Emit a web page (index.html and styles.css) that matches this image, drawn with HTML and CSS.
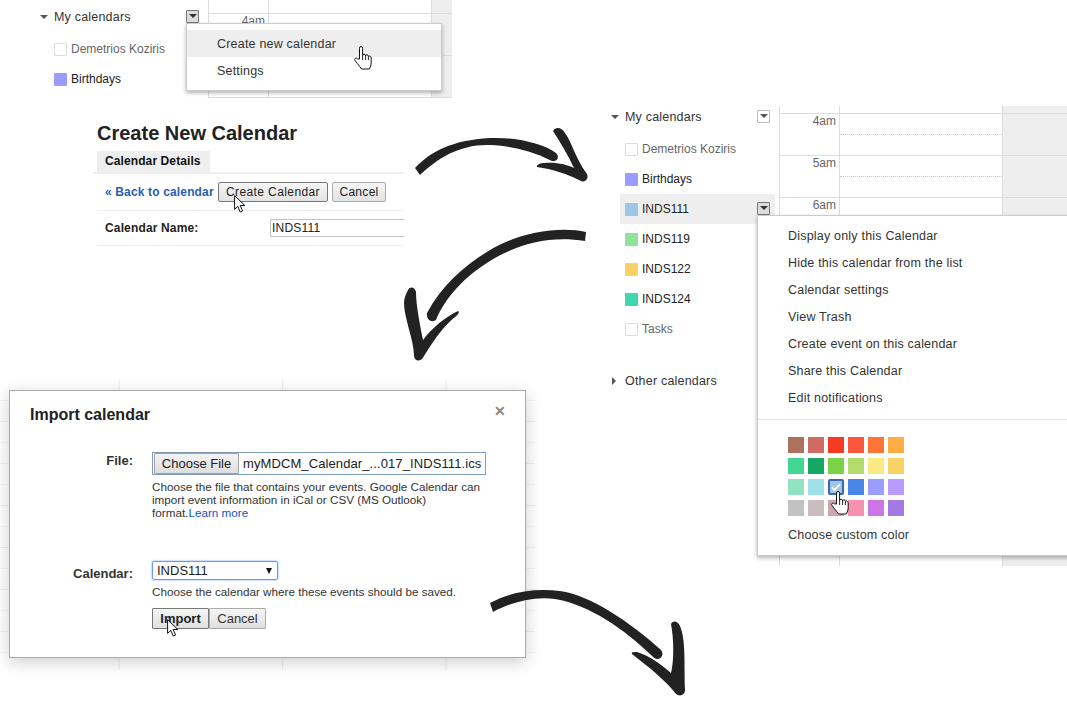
FILE: index.html
```html
<!DOCTYPE html>
<html lang="en">
<head>
    <meta charset="UTF-8">
    <title>Adding a calendar</title>
    <link rel="stylesheet" href="styles.css">
</head>
<body>
<div class="canvas">

    <!-- top left: my calendars menu -->
    <div class="cal-panel cal-small">
        <div class="sidebar">
            <div class="side-head">
                <span class="tri-down"></span>My calendars
                <span class="drop drop-on"></span>
            </div>
            <div class="side-row muted"><span class="swatch swatch-empty"></span>Demetrios Koziris</div>
            <div class="side-row"><span class="swatch birthdays"></span>Birthdays</div>
        </div>
        <div class="cal-grid">
            <div class="hour-head"><div class="hour-time"></div><div class="hour-slot"></div><div class="hour-off"></div></div>
            <div class="hour"><div class="hour-time">4am</div><div class="hour-slot"></div><div class="hour-off"></div></div>
            <div class="hour"><div class="hour-time"></div><div class="hour-slot"></div><div class="hour-off"></div></div>
            <div class="hour"><div class="hour-time"></div><div class="hour-slot"></div><div class="hour-off"></div></div>
        </div>
        <div class="menu menu-small">
            <div class="menu-item menu-item-on">Create new calendar</div>
            <div class="menu-item">Settings</div>
        </div>
    </div>

    <!-- create calendar form -->
    <div class="create-panel">
        <h1 class="create-title">Create New Calendar</h1>
        <div class="tabs"><div class="tab">Calendar Details</div></div>
        <div class="create-bar">
            <a class="back-link" href="#">&laquo; Back to calendar</a>
            <button class="btn btn-main">Create Calendar</button>
            <button class="btn">Cancel</button>
        </div>
        <div class="create-row">
            <span class="create-label">Calendar Name:</span>
            <div class="create-input">INDS111</div>
        </div>
    </div>

    <!-- right: calendar list with colour menu -->
    <div class="cal-panel cal-large">
        <div class="sidebar">
            <div class="side-head">
                <span class="tri-down"></span>My calendars
                <span class="drop"></span>
            </div>
            <div class="side-row muted"><span class="swatch swatch-empty"></span>Demetrios Koziris</div>
            <div class="side-row"><span class="swatch birthdays"></span>Birthdays</div>
            <div class="side-row side-row-on"><span class="swatch inds111"></span>INDS111<span class="drop drop-on"></span></div>
            <div class="side-row"><span class="swatch inds119"></span>INDS119</div>
            <div class="side-row"><span class="swatch inds122"></span>INDS122</div>
            <div class="side-row"><span class="swatch inds124"></span>INDS124</div>
            <div class="side-row muted"><span class="swatch swatch-empty"></span>Tasks</div>
            <div class="side-head side-other"><span class="tri-right"></span>Other calendars</div>
        </div>
        <div class="cal-grid">
            <div class="hour-head"><div class="hour-time"></div><div class="hour-slot"></div><div class="hour-off"></div></div>
            <div class="hour"><div class="hour-time">4am</div><div class="hour-slot"></div><div class="hour-off"></div></div>
            <div class="hour"><div class="hour-time">5am</div><div class="hour-slot"></div><div class="hour-off"></div></div>
            <div class="hour"><div class="hour-time">6am</div><div class="hour-slot"></div><div class="hour-off"></div></div>
            <div class="hour"><div class="hour-time"></div><div class="hour-slot"></div><div class="hour-off"></div></div>
            <div class="hour"><div class="hour-time"></div><div class="hour-slot"></div><div class="hour-off"></div></div>
            <div class="hour"><div class="hour-time"></div><div class="hour-slot"></div><div class="hour-off"></div></div>
            <div class="hour"><div class="hour-time"></div><div class="hour-slot"></div><div class="hour-off"></div></div>
            <div class="hour"><div class="hour-time"></div><div class="hour-slot"></div><div class="hour-off"></div></div>
            <div class="hour"><div class="hour-time"></div><div class="hour-slot"></div><div class="hour-off"></div></div>
            <div class="hour"><div class="hour-time"></div><div class="hour-slot"></div><div class="hour-off"></div></div>
            <div class="hour"><div class="hour-time"></div><div class="hour-slot"></div><div class="hour-off"></div></div>
        </div>
        <div class="menu menu-large">
            <div class="menu-item">Display only this Calendar</div>
            <div class="menu-item">Hide this calendar from the list</div>
            <div class="menu-item">Calendar settings</div>
            <div class="menu-item">View Trash</div>
            <div class="menu-item">Create event on this calendar</div>
            <div class="menu-item">Share this Calendar</div>
            <div class="menu-item">Edit notifications</div>
            <div class="menu-sep"></div>
            <div class="colors">
                <span style="background:#ac725e"></span><span style="background:#d06b64"></span><span style="background:#f83a22"></span><span style="background:#fa573c"></span><span style="background:#ff7537"></span><span style="background:#ffad46"></span>
                <span style="background:#42d692"></span><span style="background:#16a765"></span><span style="background:#7bd148"></span><span style="background:#b3dc6c"></span><span style="background:#fbe983"></span><span style="background:#fad165"></span>
                <span style="background:#92e1c0"></span><span style="background:#9fe1e7"></span>
                <span class="color-on" style="background:#9fc6e7">
                    <svg viewBox="0 0 16 16" width="12" height="12"><path d="M2.5 8.5l3.5 3.5 7.5-8" fill="none" stroke="#fff" stroke-width="2.4"/></svg>
                </span>
                <span style="background:#4986e7"></span><span style="background:#9a9cff"></span><span style="background:#b99aff"></span>
                <span style="background:#c2c2c2"></span><span style="background:#cabdbf"></span><span style="background:#cca6ac"></span><span style="background:#f691b2"></span><span style="background:#cd74e6"></span><span style="background:#a47ae2"></span>
            </div>
            <div class="menu-item menu-item-last">Choose custom color</div>
        </div>
    </div>

    <!-- import dialog over a faded calendar -->
    <div class="backdrop"></div>
    <div class="dialog">
        <div class="dialog-title">Import calendar</div>
        <span class="dialog-close">&#10005;</span>
        <div class="form-row">
            <label class="form-label form-label-file">File:</label>
            <div class="form-field">
                <div class="file-box">
                    <button class="file-btn">Choose File</button>
                    <span class="file-name">myMDCM_Calendar_...017_INDS111.ics</span>
                </div>
                <p class="help">Choose the file that contains your events. Google Calendar can import event information in iCal or CSV (MS Outlook) format.<a href="#">Learn more</a></p>
            </div>
        </div>
        <div class="form-row form-row-cal">
            <label class="form-label form-label-cal">Calendar:</label>
            <div class="form-field">
                <div class="select-box">INDS111<span class="select-arrow"></span></div>
                <p class="help help-cal">Choose the calendar where these events should be saved.</p>
                <div class="dialog-btns">
                    <button class="dlg-btn dlg-btn-main">Import</button>
                    <button class="dlg-btn">Cancel</button>
                </div>
            </div>
        </div>
    </div>

    <!-- brush arrows and mouse pointers -->
    <svg class="overlay" viewBox="0 0 1067 702" width="1067" height="702">
        <defs>
            <symbol id="hand" viewBox="0 0 18 24">
                <path d="M5.5 13V2.2Q5.5.5 7 .5T8.6 2.2V9.6Q8.8 8.2 10.1 8.2T11.6 9.8Q11.9 8.6 13.1 8.8T14.4 10.6Q14.8 9.7 15.8 10T17.2 11.8V17Q17.2 20 15.4 23H7.6Q5.6 20.4 3.4 17.6L1.1 14.6Q.1 13 1.3 12.3T3.6 12.9Z" fill="#fff" stroke="#111" stroke-width="1"/>
                <path d="M8.6 9.6V14M11.6 9.8V14M14.4 10.6V14" fill="none" stroke="#111" stroke-width=".9"/>
            </symbol>
            <symbol id="pointer" viewBox="0 0 12 18">
                <path d="M.6.6V14.4L3.8 11.4 6.2 17 8.6 16 6.2 10.5H10.8Z" fill="#fff" stroke="#111" stroke-width="1"/>
            </symbol>
        </defs>
        <g class="brush">
            <path d="M415 168C430 152 452 140 490 138C520 137 545 145 556 153C560 157 557 162 552 161C530 150 510 146 490 145C460 144 438 158 420 175Z"/>
            <path d="M553 131C556 126 562 128 565 133C572 142 575 158 587 174C589 179 585 183 581 181C568 174 552 169 537 167C536 165 540 163 545 163C556 162 568 165 574 168C568 155 560 142 553 131Z"/>
            <path d="M586 232C560 226 520 232 490 250C465 265 442 285 427 313C426 320 432 323 436 320C445 298 465 275 495 258C525 241 555 236 585 241Z"/>
            <path d="M408 290C410 286 415 287 416 292C416 305 420 325 423 340C432 328 445 317 458 311C460 312 458 315 455 317C445 325 435 338 424 356C421 362 415 362 414 356C414 340 404 318 404 303C404 298 406 294 408 290Z"/>
            <path d="M490 603C510 592 535 588 560 591C590 595 630 622 661 650C664 654 662 658 658 659C655 659 653 657 650 654C625 630 590 605 555 599C535 596 512 602 493 612Z"/>
            <path d="M671 624C673 620 678 621 680 626C686 640 684 665 685 690C685 695 680 697 676 694C665 680 650 668 632 654C631 652 634 652 637 652C650 656 662 665 671 673C674 660 674 640 671 624Z"/>
        </g>
        <use href="#hand" x="354" y="46" width="18" height="24"/>
        <use href="#hand" x="831" y="491" width="18" height="24"/>
        <use href="#pointer" x="234" y="195" width="12" height="18"/>
        <use href="#pointer" x="167" y="619" width="12" height="18"/>
    </svg>
</div>
</body>
</html>
```

FILE: styles.css
```css
* {
    box-sizing: border-box;
}

body {
    margin: 0;
    background: white;
    font-family: "Liberation Sans", Arial, sans-serif;
    color: #222;
}

.canvas {
    position: relative;
    width: 1067px;
    height: 702px;
    overflow: hidden;
}

/* calendar screenshots */
.cal-panel {
    position: absolute;
    display: flex;
    overflow: hidden;
}

.cal-small {
    left: 0;
    top: 0;
    width: 452px;
    height: 98px;
}

.cal-small .sidebar {
    padding-top: 6px;
}

.cal-small .hour-head {
    height: 13px;
}

.cal-large {
    left: 571px;
    top: 106px;
    width: 496px;
    height: 460px;
}

.sidebar {
    position: relative;
    width: 208px;
    flex-shrink: 0;
    padding-left: 49px;
}

.side-head {
    position: relative;
    display: flex;
    align-items: center;
    height: 21px;
    margin-bottom: 7px;
    padding-left: 5px;
    font-size: 12.5px;
    letter-spacing: 0.2px;
    color: #333;
}

.side-other {
    margin-top: 22px;
    height: 30px;
}

.tri-down {
    position: absolute;
    left: -9px;
    top: 9px;
    border: 4px solid transparent;
    border-top-color: #555;
    border-bottom: 0;
}

.tri-right {
    position: absolute;
    left: -8px;
    top: 11px;
    border: 4px solid transparent;
    border-left-color: #555;
    border-right: 0;
}

.drop {
    position: absolute;
    left: 137px;
    top: 4px;
    width: 13px;
    height: 13px;
    background: white;
    border: 1px solid #bbb;
    border-radius: 1px;
}

.drop::after {
    content: "";
    position: absolute;
    left: 2px;
    top: 3px;
    border: 4px solid transparent;
    border-top-color: #555;
    border-bottom: 0;
}

.drop-on {
    background: #ddd;
    border-color: #777;
}

.drop-on::after {
    border-top-color: #333;
}

.side-row {
    position: relative;
    display: flex;
    align-items: center;
    height: 30px;
    padding-left: 5px;
    font-size: 12px;
    color: #222;
    width: 155px;
}

.muted {
    color: #666;
}

.side-row-on {
    background: #eee;
}

.side-row-on .drop {
    top: 8px;
}

.swatch {
    width: 13px;
    height: 13px;
    margin-right: 4px;
    border-radius: 1px;
}

.swatch-empty {
    background: white;
    border: 1px solid #ddd;
}

.birthdays { background: #9a9cff; }
.inds111 { background: #9fc6e7; }
.inds119 { background: #92e19a; }
.inds122 { background: #fad165; }
.inds124 { background: #42d6ae; }

.cal-grid {
    flex: 1;
}

.hour-head,
.hour {
    display: flex;
}

.hour-head {
    height: 7px;
}

.hour {
    height: 42px;
    border-top: 1px solid #ddd;
}

.hour-time {
    width: 60px;
    padding: 0 3px 0 0;
    border-left: 1px solid #ddd;
    text-align: right;
    font-size: 12px;
    line-height: 14px;
    color: #666;
}

.hour-slot {
    width: 163px;
    border-left: 1px solid #ddd;
}

.hour-slot::before {
    content: "";
    display: block;
    height: 20px;
    border-bottom: 1px dotted #ccc;
}

.hour-head .hour-slot::before {
    display: none;
}

.hour-off {
    flex: 1;
    background: #eee;
    border-left: 1px solid #ddd;
}

/* popup menus */
.menu {
    position: absolute;
    background: white;
    border: 1px solid #ccc;
    box-shadow: 0 2px 4px rgba(0, 0, 0, 0.3);
    font-size: 12.5px;
    letter-spacing: 0.2px;
    color: #333;
}

.menu-small {
    left: 186px;
    top: 23px;
    width: 256px;
    height: 68px;
    padding-top: 6px;
}

.menu-large {
    left: 186px;
    top: 109px;
    width: 340px;
    height: 341px;
    padding-top: 6px;
}

.menu-item {
    height: 27px;
    line-height: 28px;
    padding-left: 30px;
}

.menu-item-on {
    background: #eee;
}

.menu-sep {
    margin-top: 8px;
    border-top: 1px solid #e6e6e6;
}

.colors {
    display: grid;
    grid-template-columns: repeat(6, 16px);
    grid-auto-rows: 16px;
    column-gap: 4px;
    row-gap: 5px;
    margin: 17px 0 5px 30px;
}

.color-on {
    display: flex;
    align-items: center;
    justify-content: center;
    border: 2px solid #3a67ad;
    border-radius: 2px;
}

/* create calendar */
.create-panel {
    position: absolute;
    left: 93px;
    top: 120px;
    width: 311px;
    height: 130px;
    overflow: hidden;
}

.create-title {
    margin: 0 0 5px 4px;
    font-size: 20px;
    line-height: 26px;
    font-weight: bold;
}

.tabs {
    border-bottom: 2px solid #eee;
    padding-left: 4px;
}

.tab {
    width: 113px;
    height: 21px;
    padding-left: 8px;
    background: #eee;
    font-size: 12px;
    line-height: 20px;
    font-weight: bold;
    letter-spacing: 0.1px;
    color: #111;
}

.create-bar {
    display: flex;
    align-items: center;
    height: 37px;
    margin-left: 4px;
    padding-left: 8px;
    border-bottom: 1px solid #eee;
}

.back-link {
    width: 113px;
    font-size: 12px;
    font-weight: bold;
    letter-spacing: 0.15px;
    color: #2a5db0;
    text-decoration: none;
    white-space: nowrap;
}

.btn {
    height: 20px;
    margin: 0 4px 0 0;
    padding: 0;
    width: 54px;
    background: linear-gradient(#f6f6f6, #e2e2e2);
    border: 1px solid #aaa;
    border-radius: 2px;
    font-family: inherit;
    font-size: 12px;
    letter-spacing: 0.3px;
    color: #222;
}

.btn-main {
    width: 110px;
    border-color: #777;
    letter-spacing: 0.4px;
}

.create-row {
    display: flex;
    align-items: center;
    height: 35px;
    margin-left: 4px;
    padding-left: 8px;
    border-bottom: 1px solid #eee;
}

.create-label {
    width: 165px;
    flex-shrink: 0;
    font-size: 12px;
    font-weight: bold;
    letter-spacing: 0.15px;
}

.create-input {
    width: 200px;
    flex-shrink: 0;
    height: 18px;
    padding-left: 1px;
    border: 1px solid #c4c4c4;
    font-size: 12px;
    line-height: 17px;
    letter-spacing: 0.2px;
}

/* import dialog */
.backdrop {
    position: absolute;
    left: 0;
    top: 380px;
    width: 535px;
    height: 290px;
    background-image:
        linear-gradient(to right, transparent 119px, #eee 119px, #eee 120px, transparent 120px),
        linear-gradient(to bottom, transparent 41px, #f0f0f0 41px, #f0f0f0 42px, transparent 42px),
        linear-gradient(to bottom, transparent 20px, #f6f6f6 20px, #f6f6f6 21px, transparent 21px);
    background-size: 163.5px 100%, 100% 42px, 100% 42px;
}

.dialog {
    position: absolute;
    left: 9px;
    top: 390px;
    width: 517px;
    height: 268px;
    padding-top: 14px;
    background: white;
    border: 1px solid #aaa;
    box-shadow: 0 4px 16px rgba(0, 0, 0, 0.2);
    color: #222;
}

.dialog-title {
    height: 19px;
    margin: 0 0 28px 20px;
    font-size: 16px;
    line-height: 19px;
    font-weight: bold;
}

.dialog-close {
    position: absolute;
    left: 484px;
    top: 12px;
    font-size: 14px;
    line-height: 16px;
    font-weight: bold;
    color: #888;
}

.form-row {
    display: flex;
}

.form-row-cal {
    margin-top: 42px;
}

.form-label {
    width: 123px;
    margin-right: 19px;
    text-align: right;
    font-size: 13px;
    font-weight: bold;
    color: #333;
}

.form-label-file {
    padding-top: 1px;
}

.form-label-cal {
    padding-top: 5px;
}

.form-field {
    flex: 1;
}

.file-box {
    display: flex;
    align-items: center;
    width: 334px;
    height: 23px;
    border: 1px solid #7f9db9;
    padding-left: 1px;
}

.file-btn {
    width: 85px;
    height: 21px;
    padding: 0;
    background: linear-gradient(#f4f4f4, #dedede);
    border: 1px solid #a0a0a0;
    border-radius: 1px;
    font-family: inherit;
    font-size: 13px;
    color: #222;
}

.file-name {
    margin-left: 4px;
    font-size: 13px;
    letter-spacing: 0.1px;
    white-space: nowrap;
}

.help {
    width: 340px;
    margin: 5px 0 0;
    font-size: 11.7px;
    line-height: 13px;
    color: #333;
}

.help a {
    color: #15c;
    text-decoration: none;
}

.select-box {
    position: relative;
    width: 126px;
    height: 19px;
    padding-left: 4px;
    border: 1px solid #6a9be6;
    border-radius: 2px;
    box-shadow: 0 0 2px #4d90fe;
    font-size: 13px;
    line-height: 18px;
}

.select-arrow {
    position: absolute;
    right: 5px;
    top: 6px;
    border: 3px solid transparent;
    border-top: 6px solid #111;
    border-bottom: 0;
}

.help-cal {
    white-space: nowrap;
}

.dialog-btns {
    display: flex;
    margin-top: 10px;
}

.dlg-btn {
    width: 57px;
    height: 21px;
    padding: 0;
    background: linear-gradient(#f6f6f6, #dfdfdf);
    border: 1px solid #aaa;
    border-radius: 1px;
    font-family: inherit;
    font-size: 13px;
    color: #333;
}

.dlg-btn-main {
    border-color: #777;
    font-weight: bold;
    color: #222;
}

/* drawn on top of everything */
.overlay {
    position: absolute;
    left: 0;
    top: 0;
    pointer-events: none;
}

.brush {
    filter: blur(0.4px);
}

.brush path {
    fill: #222;
}
```
